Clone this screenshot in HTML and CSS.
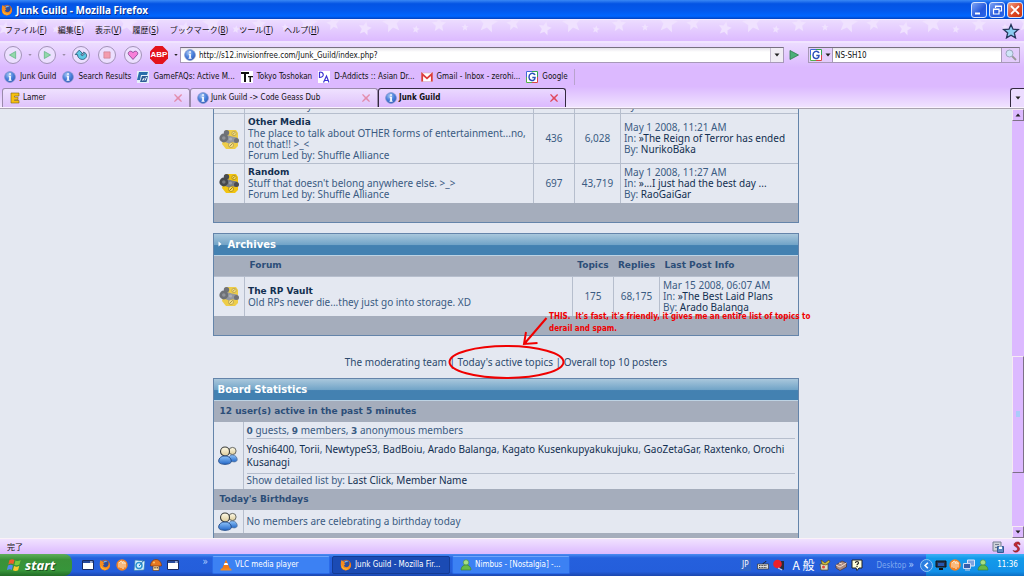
FILE: index.html
```html
<!DOCTYPE html>
<html lang="en">
<head>
<meta charset="utf-8">
<title>Junk Guild - Mozilla Firefox</title>
<link rel="stylesheet" href="styles.css">
</head>
<body>
<svg class="defs" aria-hidden="true">
  <defs>
    <radialGradient id="g-info" cx=".4" cy=".3" r=".8"><stop offset="0" stop-color="#a9c8f4"/><stop offset=".5" stop-color="#4a80dc"/><stop offset="1" stop-color="#2a52b0"/></radialGradient>
    <linearGradient id="g-head" x1="0" y1="0" x2="0" y2="1"><stop offset="0" stop-color="#fffbe8"/><stop offset="1" stop-color="#dccb98"/></linearGradient>
    <linearGradient id="g-blue" x1="0" y1="0" x2="0" y2="1"><stop offset="0" stop-color="#8fc4fa"/><stop offset="1" stop-color="#2468c8"/></linearGradient>
    <symbol id="info" viewBox="0 0 12 12"><circle cx="6" cy="6" r="5.400" fill="url(#g-info)" stroke="#7f93c8" stroke-width=".7"/><path d="M5.200 2.200h1.700v1.600H5.200zM4.700 4.800h2.200v4h.7v.9H4.500v-.9h.7V5.700h-.5z" fill="#fff"/></symbol>
    <symbol id="firefox" viewBox="0 0 14 14"><circle cx="7" cy="7" r="6" fill="#e0691a"/><circle cx="7.400" cy="6" r="4.200" fill="#2d4f9f"/><path d="M5 3.200c1.500-1.600 4-1.400 5 .3-1.800-.6-2.400.7-4 .6z" fill="#79b3ea"/><path d="M1 4.500C1 2.500 1.800 1.300 2.300.8c.2 1 .7 1.500 1.500 2 1 .1 1.800.4 2.200 1.100L4.700 5.300l1.600.5c-.6 1-1.300 1.200-1.700 1.800.8 2.300 3.600 2.500 5.500.9 1.300-1.200 1.300-3 .9-4.600C12 4.700 13.400 7.500 12 10c-1.700 3.400-6.200 4.300-9 2C.8 10 .8 7 1 4.500z" fill="#f58b1f"/><path d="M2 6.500c.3 4 4 6 8 4.300C7.500 13.700 1.500 12 2 6.500z" fill="#ffd23c"/></symbol>
    <symbol id="close" viewBox="0 0 10 10"><path d="M1 1.800 2 1l3 2.900L8.200 1l.9.900L6.200 5 9 8.200l-.9.900L5 6.200 1.800 9 1 8.200 3.900 5z" fill="#e0485c"/></symbol>
    <symbol id="google" viewBox="0 0 12 12"><path fill="#fff" d="M0 0h12v12H0z"/><path d="M.5 6V.5H6" stroke="#3f68d8" fill="none"/><path d="M6 .5h5.500V6" stroke="#32a350" fill="none"/><path d="M11.500 6v5.500H6" stroke="#d84545" fill="none"/><path d="M6 11.500H.5V6" stroke="#55b04c" fill="none"/><path d="M9 4C8.300 2.200 6.300 2 4.900 2.700 2.200 4.100 2.500 8.600 5 9.300c2 .6 4-.2 4-2.800H6.300" stroke="#2c50ba" stroke-width="1.500" fill="none"/></symbol>
    <symbol id="gears" viewBox="0 0 20 20"><path d="M6.500 1H17l2 3v13l-3 3H7l-4-5z" fill="#f2c40f"/><circle cx="15" cy="4.500" r="2.200" fill="#f9dc5b" stroke="#a98a1c" stroke-width=".8"/><circle cx="12" cy="16" r="2.600" fill="#f9dc5b" stroke="#a98a1c" stroke-width=".8"/><path d="m10.500 17.500 3-3M14 5.500l1.500-2" stroke="#8d6b0b" stroke-width=".9"/><path d="m8 6 5 1.500 5 1 1 4-3 1.500-3-1-3 1.500-4-1.500z" fill="#7a7e86"/><circle cx="7.500" cy="3.800" r="2.700" fill="#4a4b50"/><circle cx="4.800" cy="9" r="4.400" fill="#46484d"/><circle cx="4.800" cy="9" r="1.800" fill="#75777c"/><circle cx="17.500" cy="11.500" r="2.500" fill="#4a4b50"/><circle cx="11.500" cy="10" r="1.600" fill="#9a9da5"/></symbol>
    <symbol id="people" viewBox="0 0 20 19"><circle cx="14.500" cy="5" r="3.600" fill="url(#g-head)" stroke="#585a55" stroke-width=".9"/><path d="M10 15c0-4 2-6 4.500-6 3 0 4.700 2.500 4.700 4.500 0 1.400-1 2.200-3 2.400z" fill="url(#g-blue)" stroke="#53759f" stroke-width=".8"/><circle cx="7" cy="5.500" r="4.500" fill="url(#g-head)" stroke="#393b39" stroke-width="1.100"/><path d="M.7 15.300C.7 11.800 3.500 10 7 10s6.300 2 6.300 5.300c0 2-2.800 3-6.300 3s-6.300-1-6.300-3z" fill="url(#g-blue)" stroke="#244d8b"/></symbol>
    <symbol id="orange" viewBox="0 0 12 12"><circle cx="6" cy="6" r="5.700" fill="#f28224"/><path d="M3 3.500v5M5 2v7M7 3v7M9 3.500v5M3 4c2-3 4-2 4 1M6 4c1-2 3-2 3 1" stroke="#fff0d6" fill="none"/></symbol>
    <symbol id="window" viewBox="0 0 12 12"><path fill="#fff" stroke="#182a62" d="M.5 1.500h11v9H.5z"/><path d="M1 2h10v2H1z" fill="#274a9c"/><path d="M8 2.500h2.500v1H8z" fill="#fff"/></symbol>
    <symbol id="down" viewBox="0 0 6 4"><path d="M.5.5h5L3 3.500z" fill="currentColor"/></symbol>
    <symbol id="buddy" viewBox="0 0 12 12"><circle cx="6" cy="3.500" r="2.700" fill="#a6df87" stroke="#458d38" stroke-width=".6"/><path d="M1 11c0-3 2-5 5-5s5 2 5 5z" fill="#68ba48" stroke="#37812b" stroke-width=".6"/></symbol>
  </defs>
</svg>

<header class="titlebar">
  <svg class="icon" viewBox="0 0 14 14"><use href="#firefox"/></svg>
  <h1>Junk Guild - Mozilla Firefox</h1>
  <div class="window-buttons">
    <button aria-label="Minimize"><svg viewBox="0 0 14 14"><path d="M3 9.500h5v2H3z" fill="#fff"/></svg></button>
    <button aria-label="Restore"><svg viewBox="0 0 14 14"><path d="M5.500 5V3h6v5h-2M3.500 6h5.500v5H3.500zM3.500 6.500H9M5.500 3.500h6" stroke="#fff" fill="none" stroke-width="1.200"/></svg></button>
    <button class="quit" aria-label="Close"><svg viewBox="0 0 14 14"><path d="m3 3 8 8m0-8-8 8" stroke="#fff" stroke-width="1.800"/></svg></button>
  </div>
</header>

<nav class="menubar">
  <button>ファイル(<u>F</u>)</button><button>編集(<u>E</u>)</button><button>表示(<u>V</u>)</button><button>履歴(<u>S</u>)</button><button>ブックマーク(<u>B</u>)</button><button>ツール(<u>T</u>)</button><button>ヘルプ(<u>H</u>)</button>
  <svg class="throbber" viewBox="0 0 18 16"><path d="m9 1.500 2 4.700 5.300.4-4 3.300 1.200 5L9 12.200 4.500 14.900l1.200-5-4-3.300 5.300-.4z" fill="#8cccf2" stroke="#26355b" stroke-width="1.300"/></svg>
</nav>

<div class="navbar">
  <button class="round" aria-label="Back"><svg viewBox="0 0 18 18"><path d="M12 5v8L5 9z" fill="#93d9ab" stroke="#5cae80" stroke-width=".8"/></svg></button>
  <svg class="arrow dim"><use href="#down"/></svg>
  <button class="round" aria-label="Forward"><svg viewBox="0 0 18 18"><path d="M6 5v8l7-4z" fill="#93d9ab" stroke="#5cae80" stroke-width=".8"/></svg></button>
  <svg class="arrow dim"><use href="#down"/></svg>
  <button class="round" aria-label="Reload"><svg viewBox="0 0 18 18"><path d="m2.500 8.500 4.500-5 4.500 4.500H9c0 2 2 2.500 3 .8.700-1.200.3-2.200-.5-3 3.400.4 4.800 3.600 3 6.200-2.700 3.800-9.300 2-9.500-3.500z" fill="#5cc8e4" stroke="#24506e" stroke-width=".9"/></svg></button>
  <button class="round" aria-label="Stop"><svg viewBox="0 0 18 18"><path d="M5.500 5.500h7v7h-7z" fill="#f49cae" stroke="#c98191" stroke-width=".8"/></svg></button>
  <button class="round" aria-label="Home"><svg viewBox="0 0 18 18"><path d="M9 14 4 8.500C2.500 5.500 6.500 3 9 6.300 11.500 3 15.500 5.500 14 8.500z" fill="#f77fd8" stroke="#7d3c8c" stroke-width=".9"/></svg></button>
  <button class="abp" aria-label="Adblock Plus">ABP</button>
  <svg class="arrow"><use href="#down"/></svg>
  <div class="field address">
    <svg class="icon"><use href="#info"/></svg>
    <input type="text" aria-label="Address" value="http://s12.invisionfree.com/Junk_Guild/index.php?">
    <button class="drop" aria-label="History"><svg class="arrow"><use href="#down"/></svg></button>
  </div>
  <button class="go" aria-label="Go"><svg viewBox="0 0 12 12"><path d="M2 1.500v9L10.500 6z" fill="#4aaf78" stroke="#2c7a4d" stroke-width=".8"/></svg></button>
  <div class="field search">
    <button class="engine" aria-label="Search engine"><svg class="icon"><use href="#google"/></svg><svg class="arrow"><use href="#down"/></svg></button>
    <input type="text" aria-label="Search" value="NS-SH10">
    <button class="find" aria-label="Find"><svg class="icon" viewBox="0 0 12 12"><path d="m7 7 4 4" stroke="#999" stroke-width="1.800"/><circle cx="4.500" cy="4.500" r="3.500" fill="#cfe6f8" stroke="#9ba8bd"/></svg></button>
  </div>
</div>

<nav class="bookmarks">
  <a href="#"><svg class="icon"><use href="#info"/></svg>Junk Guild</a>
  <a href="#"><svg class="icon"><use href="#info"/></svg>Search Results</a>
  <a href="#"><svg class="icon" viewBox="0 0 12 12"><path d="M0 0h12v12H0z" fill="#e5f1fa"/><path d="M2 1h9l-1 3H4L3 9H0z" fill="#2a6fab"/><path d="M3 11 5 5h6L9.500 11z" fill="#2c5d94"/><path d="M5 9h1.500L7 7m1 2.500L9.500 6" stroke="#fff" fill="none"/></svg>GameFAQs: Active M...</a>
  <a href="#"><svg class="icon" viewBox="0 0 12 12"><path fill="#fff" d="M0 0h12v12H0z"/><path d="M0 1h8v2H5v8H3V3H0zM7 5h5v1.300H10V11H8.500V6.300H7z" fill="#111"/></svg>Tokyo Toshokan</a>
  <a href="#"><svg class="icon" viewBox="0 0 12 12"><path fill="#fff" d="M0 0h12v12H0z"/><path d="M1.500 1v5.500c5 0 5-5.500 0-5.500M5.500 11.500 8.500 5l2.500 6.500M6.500 9.500h4" stroke="#3b32d2" stroke-width="1.200" fill="none"/></svg>D-Addicts :: Asian Dr...</a>
  <a href="#"><svg class="icon" viewBox="0 0 12 12"><path fill="#fff" stroke="#d9b3bb" stroke-width=".6" d="M.4 2h11.200v8.500H.4z"/><path d="M1.200 10.500V3L6 7.300 10.800 3v7.500" stroke="#dc3c3c" stroke-width="1.800" fill="none"/></svg>Gmail - Inbox - zerohi...</a>
  <a href="#"><svg class="icon"><use href="#google"/></svg>Google</a>
</nav>

<div class="tabs" role="tablist">
  <div class="tab"><svg class="icon" viewBox="0 0 12 12"><path d="M2 1h8v3H5.500v1.200H9v2.600H5.500V8.500H10V11H2z" fill="#f8c010" stroke="#7b6118" stroke-width=".6"/></svg><button role="tab">Lamer</button><button class="shut" aria-label="Close tab"><svg><use href="#close"/></svg></button></div>
  <div class="tab"><svg class="icon"><use href="#info"/></svg><button role="tab">Junk Guild -&gt; Code Geass Dub</button><button class="shut" aria-label="Close tab"><svg><use href="#close"/></svg></button></div>
  <div class="tab active"><svg class="icon"><use href="#info"/></svg><button role="tab" aria-selected="true">Junk Guild</button><button class="shut" aria-label="Close tab"><svg><use href="#close"/></svg></button></div>
  <button class="all-tabs" aria-label="All tabs"><svg class="arrow"><use href="#down"/></svg></button>
</div>

<div class="viewport">
  <main class="page">
    <section class="box scrolled">
      <table class="forums recent">
        <colgroup><col class="c-icon"><col><col class="c-topics"><col class="c-replies"><col class="c-last"></colgroup>
        <tr class="partial"><td></td><td class="left">Forum Led by: Shuffle Alliance</td><td></td><td></td><td class="left last">By: <a href="#">Albion Katos Unchat</a></td></tr>
        <tr><td><svg class="gears old"><use href="#gears"/></svg></td><td class="left"><a href="#"><b>Other Media</b></a><br>The place to talk about OTHER forms of entertainment...no, not that!! &gt;_&lt;<br>Forum Led by: Shuffle Alliance</td><td>436</td><td>6,028</td><td class="left last">May 1 2008, 11:21 AM<br>In: <a href="#">»The Reign of Terror has ended</a><br>By: <a href="#">NurikoBaka</a></td></tr>
        <tr><td><svg class="gears"><use href="#gears"/></svg></td><td class="left"><a href="#"><b>Random</b></a><br>Stuff that doesn't belong anywhere else. &gt;_&gt;<br>Forum Led by: Shuffle Alliance</td><td>697</td><td>43,719</td><td class="left last">May 1 2008, 11:27 AM<br>In: <a href="#">»...I just had the best day ...</a><br>By: <a href="#">RaoGaiGar</a></td></tr>
      </table>
      <div class="foot"></div>
    </section>

    <section class="box">
      <h2><svg class="bullet" viewBox="0 0 4 6"><path d="M.5.500 3.500 3 .5 5.500z" fill="#fff"/></svg>Archives</h2>
      <table class="forums">
        <colgroup><col class="c-icon"><col><col class="c-topics"><col class="c-replies"><col class="c-info"></colgroup>
        <tr><th></th><th class="left">Forum</th><th>Topics</th><th>Replies</th><th class="left">Last Post Info</th></tr>
        <tr><td><svg class="gears old"><use href="#gears"/></svg></td><td class="left"><a href="#"><b>The RP Vault</b></a><br>Old RPs never die...they just go into storage. XD</td><td>175</td><td>68,175</td><td class="left last">Mar 15 2008, 06:07 AM<br>In: <a href="#">»The Best Laid Plans</a><br>By: <a href="#">Arado Balanga</a></td></tr>
      </table>
      <div class="foot"></div>
    </section>

    <div class="links">
      <a href="#">The moderating team</a> | <a href="#">Today's active topics</a> | <a href="#">Overall top 10 posters</a>
      <svg class="scribble" viewBox="0 0 120 66"><ellipse cx="58.500" cy="47" rx="57" ry="16" fill="none" stroke="#f00000" stroke-width="2"/><path d="M98.500 3 77 28M78 17l-2 12 13.500-1" fill="none" stroke="#f00000" stroke-width="2"/></svg>
      <p class="note">THIS.&nbsp; It's fast, it's friendly, it gives me an entire list of topics to<br>derail and spam.</p>
    </div>

    <section class="box stats">
      <h2>Board Statistics</h2>
      <h3>12 user(s) active in the past 5 minutes</h3>
      <div class="row">
        <div class="who"><svg><use href="#people"/></svg></div>
        <div class="detail">
          <p><b>0</b> guests, <b>9</b> members, <b>3</b> anonymous members</p>
          <p class="names"><a href="#">Yoshi6400</a>, <a href="#">Torii</a>, <a href="#">NewtypeS3</a>, <a href="#">BadBoiu</a>, <a href="#">Arado Balanga</a>, <a href="#">Kagato Kusenkupyakukujuku</a>, <a href="#">GaoZetaGar</a>, <a href="#">Raxtenko</a>, <a href="#">Orochi Kusanagi</a></p>
          <p>Show detailed list by: <a href="#">Last Click</a>, <a href="#">Member Name</a></p>
        </div>
      </div>
      <h3>Today's Birthdays</h3>
      <div class="row birthdays">
        <div class="who"><svg><use href="#people"/></svg></div>
        <div class="detail"><p>No members are celebrating a birthday today</p></div>
      </div>
      <div class="foot"></div>
    </section>
  </main>
  <div class="scrollbar">
    <button class="up" aria-label="Scroll up"><svg class="arrow"><use href="#down"/></svg></button>
    <div class="track"><div class="thumb"></div></div>
    <button aria-label="Scroll down"><svg class="arrow"><use href="#down"/></svg></button>
  </div>
</div>

<footer class="status"><span>完了</span>
  <svg class="icon" viewBox="0 0 12 12"><path d="M1 1h8v9H1z" fill="#cfd2da" stroke="#777e91"/><path d="M3 3h4v1H3zM3 6h3v1H3z" fill="#777e91"/><path d="M5.500 5.500h6v6h-6z" fill="#5a87c2" stroke="#345a92"/><path d="M7 5.500h3V8H7z" fill="#fff"/></svg>
  <svg class="icon" viewBox="0 0 12 12"><path d="M8.500 1C5 .5 3 3 4.500 5c1 1 3 1 3 3S5 10.500 3 9.500C5 13 10 10.500 9.500 7.500 9 5.500 7 5 7 3.800S8.500 3 10 4c.3-1.500-.5-2.700-1.500-3z" fill="#c32631" stroke="#70151c" stroke-width=".5"/></svg>
</footer>

<footer class="taskbar">
  <button class="start"><svg viewBox="0 0 16 16"><path d="M2.500 3c2-1.300 3.500-1 5 0L6.300 7.300c-1.700-1-3-.9-5 .2z" fill="#f05c2c"/><path d="M8.500 3.400c1.800 1 3.500.8 5.200-.3l-1.200 4.500c-1.800 1-3.400 1-5.100.1z" fill="#7ccb3c"/><path d="M1 8.600c2-1.200 3.500-1 5-.1l-1.200 4.400c-1.700-1-3-.8-5 .3z" fill="#5089f0"/><path d="M7.100 9c1.800 1 3.500.8 5.200-.2l-1.200 4.400c-1.800 1.100-3.400 1-5.100.1z" fill="#fbc92e"/></svg>start</button>
  <div class="quick">
    <svg class="icon"><use href="#window"/></svg>
    <svg class="icon"><use href="#firefox"/></svg>
    <svg class="icon"><use href="#orange"/></svg>
    <svg class="icon" viewBox="0 0 12 12"><path d="m2 1 10 1-1 9-10 .5z" fill="#d8f0fd" stroke="#327aad" stroke-width=".7"/><circle cx="6" cy="6.500" r="3" fill="none" stroke="#2a94d1" stroke-width="1.500"/><path d="m6 7 5-6" stroke="#2369af"/></svg>
    <svg class="icon" viewBox="0 0 12 12"><path d="M3 6h6v5.500H3z" fill="#ffdfaa" stroke="#70421d" stroke-width=".7"/><path d="M.5 7C.5 3 3 .5 6 .5S11.500 3 11.500 7z" fill="#e57722" stroke="#7e3510" stroke-width=".7"/><circle cx="4" cy="3.500" r="1" fill="#ffc66b"/><path d="M5 8v1.500M7.200 8v1.500" stroke="#321"/></svg>
    <svg class="icon"><use href="#window"/></svg>
    <span class="more">»</span>
  </div>
  <button class="task"><svg class="icon" viewBox="0 0 12 12"><path d="M6 .5 10 10H2z" fill="#f47b17"/><path d="m4.600 4 2.800 0 .8 2H3.800z" fill="#fff"/><path d="M1 9.500h10l.7 2H.3z" fill="#f28b25"/></svg>VLC media player</button>
  <button class="task current"><svg class="icon"><use href="#firefox"/></svg>Junk Guild - Mozilla Fir...</button>
  <button class="task"><svg class="icon"><use href="#buddy"/></svg>Nimbus - [Nostalgia] -...</button>
  <div class="language">
    <span class="jp">JP</span>
    <svg class="icon" viewBox="0 0 12 12"><path d="M.5 5h11v5H.5z" fill="#ddd" stroke="#333" stroke-width=".7"/><path d="M2 6.500h8M2 8.500h8" stroke="#444" stroke-dasharray="1 .6"/><path d="M6 5c0-2 3-1 3-3" stroke="#222" fill="none"/></svg>
    <svg class="icon" viewBox="0 0 12 12"><path d="M8 2h3v9l-4-2z" fill="#2b2b38"/><circle cx="4.500" cy="5" r="4.300" fill="#ec2029"/><path d="m5 9 4 2" stroke="#ddd"/></svg>
    <span class="ime">A 般</span>
    <svg class="icon" viewBox="0 0 12 12"><path d="M1 5h8v6H2z" fill="#dfdbc0" stroke="#514923" stroke-width=".7"/><path d="m3 5-1-4 4 3 4-3 1 2-4 3z" fill="#cfc23f" stroke="#554411" stroke-width=".6"/><circle cx="4.500" cy="8" r="1.500" fill="#e34836"/></svg>
    <svg class="icon" viewBox="0 0 12 12"><path d="m1 6 6-4 4.500 2v4L5 11.500 1 9z" fill="#a98a81" stroke="#4a3534" stroke-width=".7"/><path d="m1 6 4 2 6.500-4M4 4l3 1" stroke="#f1dccf" fill="none"/></svg>
    <svg class="icon" viewBox="0 0 12 12"><path d="M1 1h10v8H8l-2 2.500L5 9H1z" fill="#ffffdc" stroke="#222"/><path d="M4.500 4c0-2 3-2 3 0 0 1-1.500 1-1.500 2.200M6 7v1.200" stroke="#222" fill="none" stroke-width="1.200"/></svg>
  </div>
  <span class="desktop">Desktop <span class="more">»</span></span>
  <div class="tray">
    <button class="hide" aria-label="Hide icons"><svg viewBox="0 0 12 12"><path d="M7.500 3 4.500 6l3 3" stroke="#fff" stroke-width="1.800" fill="none"/></svg></button>
    <svg class="icon" viewBox="0 0 12 12"><path d="M1 2h10v6H1z" fill="#223350" stroke="#111"/><path d="M3 4h6v3H3z" fill="#2858b0"/><path d="M4 10h4" stroke="#111" stroke-width="2"/></svg>
    <svg class="icon"><use href="#orange"/></svg>
    <svg class="icon" viewBox="0 0 12 12"><path d="M4.500 1h7v6h-7z" fill="#7ea3df" stroke="#dbe7fc"/><path d="M.5 4.500h7v5h-7z" fill="#355caa" stroke="#c9daf6"/><path d="M2 11h5" stroke="#ccd"/></svg>
    <svg class="icon"><use href="#buddy"/></svg>
    <time>11:36</time>
  </div>
</footer>
</body>
</html>
```
FILE: styles.css
```css
* { box-sizing: border-box; }
body {
  margin: 0;
  height: 100vh;
  display: flex;
  flex-direction: column;
  overflow: hidden;
  background: #dcb9ff;
  color: #111;
  font: 8px/12px "DejaVu Sans Condensed", "Noto Sans CJK JP", sans-serif;
}
button, input { font: inherit; color: inherit; border: 0; padding: 0; margin: 0; background: none; }
a { color: inherit; text-decoration: none; }
h1, h2, h3, p { margin: 0; font-size: inherit; }
svg { display: block; flex: none; }
.defs { position: absolute; width: 0; height: 0; }
.icon { width: 12px; height: 12px; }
.arrow { width: 6px; height: 4px; color: #222; }
.dim { color: #998ca8; }

.titlebar {
  flex: none;
  height: 19px;
  display: flex;
  align-items: center;
  gap: 3px;
  padding: 0 1px;
  background: linear-gradient(#3a88f5, #0454e4 20%, #0459ec 55%, #0066ff 85%, #0342c0);
  color: #fff;
}
.titlebar h1 { flex: 1; font: bold 10px/14px "Noto Sans", sans-serif; text-shadow: 1px 1px #0a2f8c; }
.window-buttons { display: flex; gap: 2px; }
.window-buttons button { width: 16px; height: 16px; border: 1px solid #d7e4fd; border-radius: 3px; background: linear-gradient(135deg, #7fa5f5, #2458dc 60%, #2a68ec); }
.window-buttons .quit { background: linear-gradient(135deg, #f0a083, #dc4420 60%, #c8350f); }

.menubar {
  flex: none;
  height: 22px;
  display: flex;
  align-items: center;
  gap: 11px;
  padding: 0 4px 0 5px;
  border-top: 1px solid #f6eaff;
  background:
    url("data:image/svg+xml,%3Csvg xmlns='http://www.w3.org/2000/svg' width='180' height='22'%3E%3Cdefs%3E%3Cpath id='s' d='M0-10 3-3.200 10-2.500 4.500 2.500 6 10 0 6-6 10-4.500 2.500-10-2.500-3-3.200z' fill='%23f0e2ff'/%3E%3C/defs%3E%3Cuse href='%23s' transform='translate(25 8) rotate(12) scale(.65)'/%3E%3Cuse href='%23s' transform='translate(52 2) rotate(-10) scale(.95)'/%3E%3Cuse href='%23s' transform='translate(76 9) rotate(10) scale(.36)'/%3E%3Cuse href='%23s' transform='translate(99 4) scale(.7)'/%3E%3Cuse href='%23s' transform='translate(125 7) scale(.34)'/%3E%3Cuse href='%23s' transform='translate(148 2) rotate(10) scale(.95)'/%3E%3Cuse href='%23s' transform='translate(173 3) rotate(-10) scale(.65)'/%3E%3C/svg%3E") 160px 0 repeat-x,
    linear-gradient(#ecdcff, #dcbaff);
}
.throbber { width: 18px; height: 16px; margin-left: auto; }

.navbar {
  flex: none;
  height: 26px;
  display: flex;
  align-items: center;
  gap: 8px;
  padding: 0 4px;
  border-top: 2px solid #f1e4ff;
  background: linear-gradient(#ecdcff, #dcbaff);
}
.navbar > .arrow { width: 4px; margin: 0 -2px; }
.round { width: 18px; height: 18px; border: 1px solid #a293b8; border-radius: 50%; background: #ecdfff; }
.abp { width: 18px; height: 18px; background: #e3131b; clip-path: polygon(30% 0, 70% 0, 100% 30%, 100% 70%, 70% 100%, 30% 100%, 0 70%, 0 30%); color: #fff; font: bold 8px/18px "Liberation Sans", sans-serif; }
.field { display: flex; align-items: center; height: 16px; border: 1px solid #a799b8; border-top-color: #77707f; background: linear-gradient(#e6e3ea, #fff 4px); }
.field input { flex: 1; min-width: 0; height: 14px; outline: 0; }
.address { flex: 1; margin-left: -4px; padding-left: 3px; }
.address input { padding: 0 3px; }
.search input { padding: 0 2px; }
.drop { width: 13px; height: 14px; display: grid; place-items: center; border-left: 1px solid #c5bcd0; background: #f0ecf4; }
.go { margin: 0 0 0 -4px; }
.go svg { width: 12px; height: 12px; }
.search { width: 212px; }
.engine { display: flex; align-items: center; gap: 3px; height: 14px; padding: 0 1px; border-right: 1px solid #a799b8; background: #e3ccfb; }
.find { width: 18px; height: 14px; display: grid; place-items: center; border-left: 1px solid #a799b8; background: #e3ccfb; }

.bookmarks { flex: none; height: 20px; display: flex; align-items: center; gap: 6px; padding: 0 4px; }
.bookmarks a { display: flex; align-items: center; gap: 4px; white-space: nowrap; }
.bookmarks::after { content: ""; width: 1px; height: 16px; background: #b8a3cd; }

.tabs { flex: none; height: 21px; display: flex; align-items: flex-end; padding: 0 0 0 2px; background: linear-gradient(#dcbaff, #f0e2ff); border-bottom: 1px solid #faf2ff; }
.tab { width: 188px; height: 19px; display: flex; align-items: center; gap: 2px; padding: 0 6px; border: 1px solid #9a8aab; border-bottom: 0; border-radius: 3px 3px 0 0; background: linear-gradient(#efe1ff, #dfc3fb); }
.tab > button:first-of-type { flex: 1; text-align: left; white-space: nowrap; }
.shut svg { width: 10px; height: 10px; opacity: .5; }
.active { border-color: #33293f; background: linear-gradient(#ead8ff, #dcb9ff); font-weight: bold; }
.active .shut svg { opacity: 1; }
.all-tabs { width: 14px; height: 19px; margin-left: auto; display: grid; place-items: center; border: 1px solid #33293f; border-width: 1px 0 0 1px; border-radius: 3px 0 0 0; background: #ecdcff; }

.viewport { flex: 1; min-height: 0; display: flex; background: #e4e8f1; border-top: 1px solid #a9a3b0; }
.page { flex: 1; overflow: hidden; font: 10px/11px "Noto Sans", sans-serif; color: #3a5b82; }
.page b, .page th, .page h2, .page h3 { font-family: "DejaVu Sans", sans-serif; font-weight: bold; }
.page b, .page th, .page h3 { font-size: 9px; }
.box { width: 58%; margin: 0 auto 10px; border: 1px solid #6484aa; }
.scrolled { margin-top: -36px; }
.box h2 {
  height: 22px;
  display: flex;
  align-items: center;
  gap: 6px;
  padding: 0 4px;
  border-bottom: 1px solid #bdd3e4;
  background: linear-gradient(#a9c7dc, #73a5c8 50%, #4381b1 55%, #4381b1);
  color: #fff;
  font-size: 10px;
}
.bullet { width: 4px; height: 6px; }
.forums { width: 100%; table-layout: fixed; border-collapse: collapse; }
.c-icon { width: 31px; }
.c-topics { width: 41px; }
.c-replies { width: 46px; }
.c-last { width: 178px; }
.c-info { width: 139px; }
.forums td, .forums th { text-align: center; vertical-align: middle; padding: 2px 3px; }
.forums td { height: 39px; border: 1px solid #b6becd; border-width: 1px 0 0 1px; }
.forums td:first-child { border-left: 0; }
.partial td { vertical-align: bottom; }
.forums th { height: 21px; padding: 0; background: #a5adbc; color: #2c4e78; }
.forums .left { text-align: left; }
.forums th.left { padding-left: 5px; }
.last { white-space: nowrap; }
.forums a, .names a, .row a { color: #122f50; }
.gears { width: 20px; height: 20px; margin: auto; }
.old { opacity: .75; }
.foot { height: 19px; background: #a5adbc; }
.links { position: relative; width: 58%; margin: 0 auto; padding: 11px 0 0; height: 32px; text-align: center; color: #2c4a6e; white-space: nowrap; }
.scribble { position: absolute; left: 50%; top: -31px; width: 120px; height: 66px; margin-left: -58px; }
.note { position: absolute; left: 50%; top: -35px; margin-left: 43px; text-align: left; color: #f00000; font: bold 8px/12px "DejaVu Sans Condensed", sans-serif; }
.box h3 { height: 21px; padding: 5px 6px; background: #a5adbc; color: #2c4e78; }
.row { display: flex; }
.who { width: 30px; display: grid; place-items: center; border-right: 1px solid #b6becd; }
.who svg { width: 20px; height: 19px; }
.detail { flex: 1; padding: 3px; }
.names { margin: 1px 0; padding: 4px 0; border: 1px solid #b6becd; border-width: 1px 0; line-height: 13px; }
.birthdays .detail { padding: 6px 3px; }

.scrollbar { width: 12px; display: flex; flex-direction: column; background: #dcb9ff; }
.scrollbar button { height: 12px; display: grid; place-items: center; border: 1px solid; border-color: #f6eaf4 #7d7087 #7d7087 #f6eaf4; }
.up svg { transform: rotate(180deg); }
.track { flex: 1; display: flex; flex-direction: column; }
.thumb { height: 29%; margin-top: auto; margin-bottom: 53px; display: grid; place-items: center; border: 1px solid; border-color: #f6eaf4 #7d7087 #7d7087 #f6eaf4; }
.thumb::after { content: ""; width: 4px; height: 6px; background: #aacbfa; }

.status { flex: none; height: 16px; display: flex; align-items: center; gap: 6px; padding: 0 2px 0 7px; background: linear-gradient(#f1e2ff, #dcbaff); border-top: 1px solid #faf2f8; font: 8px/12px "Noto Sans CJK JP", sans-serif; }
.status span { flex: 1; }
.taskbar { flex: none; height: 22px; display: flex; align-items: center; background: linear-gradient(#4b8df2, #2560dd 18%, #245edb 80%, #1b47ae); color: #fff; }
.start { width: 72px; height: 22px; display: flex; align-items: center; gap: 2px; padding-left: 7px; border-radius: 0 8px 8px 0; background: linear-gradient(#5fae5c, #3a9139 25%, #37953a 75%, #226d26); font: italic bold 13px/18px "Open Sans", sans-serif; text-shadow: 1px 1px #1c5420; }
.start svg { width: 16px; height: 16px; }
.quick { width: 140px; display: flex; align-items: center; gap: 5px; padding-left: 10px; }
.more { color: #b4d0ff; font-size: 10px; }
.quick .more { margin-left: auto; padding-right: 4px; padding-bottom: 6px; }
.task { flex: 0 1 118px; height: 18px; margin-right: 2px; display: flex; align-items: center; gap: 3px; padding-left: 7px; border: 1px solid #2a6ae8; border-top-color: #6fa5fa; border-radius: 2px; background: #3c81f3; white-space: nowrap; overflow: hidden; }
.task.current { background: #1b4bb4; border-color: #143b94; }
.language { margin-left: auto; display: flex; align-items: center; gap: 4px; }
.jp { padding: 0 2px; margin-right: 2px; background: #2f65c8; }
.ime { margin-left: 4px; font: 12px/16px "Noto Sans CJK JP", sans-serif; }
.desktop { margin: 0 12px 0 14px; color: #7fa9ef; white-space: nowrap; }
.tray { width: 98px; height: 22px; display: flex; align-items: center; gap: 2px; background: linear-gradient(#3fb0f6, #139bea 20%, #1290e8 80%, #0d6fc4); }
.hide { width: 13px; height: 13px; margin-left: -6px; border-radius: 50%; border: 1px solid #8fc6f5; background: #2c7fe0; }
.tray time { margin: 0 auto; }
```
